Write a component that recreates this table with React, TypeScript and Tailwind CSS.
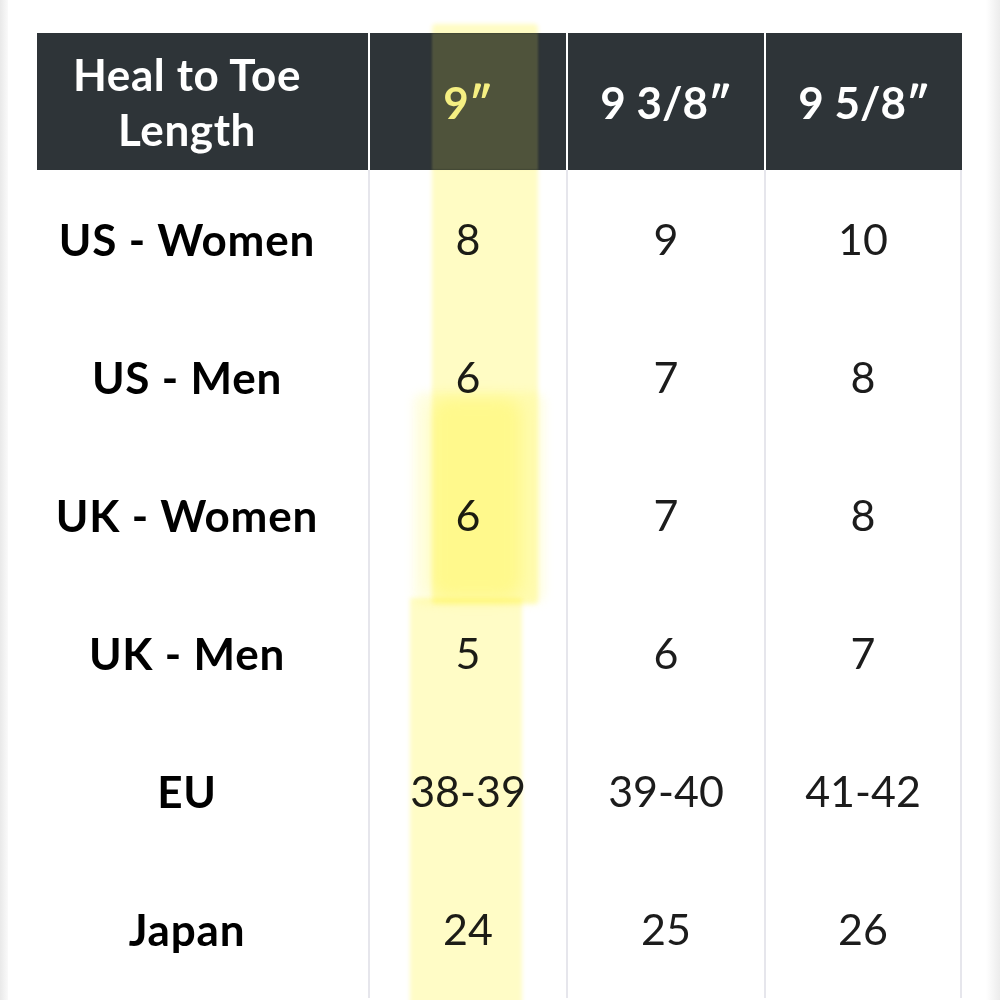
import React from "react";

const rows: [string, string, string, string][] = [
  ["US - Women", "8", "9", "10"],
  ["US - Men", "6", "7", "8"],
  ["UK - Women", "6", "7", "8"],
  ["UK - Men", "5", "6", "7"],
  ["EU", "38-39", "39-40", "41-42"],
  ["Japan", "24", "25", "26"],
];

export default function App() {
  return (
    <div
      className="relative w-[1000px] h-[1000px] overflow-hidden bg-white flex"
      style={{ fontFamily: "Lato, 'Noto Sans', sans-serif" }}
    >
      <div className="w-[8px] h-full bg-gradient-to-r from-[#e9e9e9] to-[#fafafa]" />
      <div className="flex-1 pl-[29px] pt-[33px]">
        <div className="w-[925px] grid grid-cols-[333px_198px_198px_196px]">
          {/* header */}
          <div className="h-[137px] bg-[#2e3438] flex items-center justify-center pr-[31px] border-r-2 border-white">
            <div className="text-white font-bold text-[44px] leading-[55px] text-center tracking-[0.6px]">
              Heal to Toe
              <br />
              Length
            </div>
          </div>
          <div className="h-[137px] bg-[#2e3438] flex items-center justify-center border-r-2 border-white">
            <span className="text-[#f4f1a6] font-bold text-[44px]">9″</span>
          </div>
          <div className="h-[137px] bg-[#2e3438] flex items-center justify-center border-r-2 border-white">
            <span className="text-white font-bold text-[44px]">9 3/8″</span>
          </div>
          <div className="h-[137px] bg-[#2e3438] flex items-center justify-center">
            <span className="text-white font-bold text-[44px]">9 5/8″</span>
          </div>
          {rows.map((r) => (
            <React.Fragment key={r[0]}>
              <div className="h-[138px] flex items-center justify-center pr-[31px] border-r-2 border-[#e6e6ec]">
                <span className="font-bold text-[44px] tracking-[0.8px] text-black">{r[0]}</span>
              </div>
              <div className="h-[138px] flex items-center justify-center border-r-2 border-[#e6e6ec]">
                <span className="text-[43px] text-[#1c1c1c]">{r[1]}</span>
              </div>
              <div className="h-[138px] flex items-center justify-center border-r-2 border-[#e6e6ec]">
                <span className="text-[43px] text-[#1c1c1c]">{r[2]}</span>
              </div>
              <div className="h-[138px] flex items-center justify-center border-r-2 border-[#e6e6ec]">
                <span className="text-[43px] text-[#1c1c1c]">{r[3]}</span>
              </div>
            </React.Fragment>
          ))}
        </div>
      </div>
      <div className="w-[14px] h-full bg-gradient-to-r from-[#ffffff] to-[#ececec]" />

      {/* highlighter strokes */}
      <div className="pointer-events-none absolute left-[432px] top-[24px] w-[106px] h-[580px] bg-[#fffcc4] mix-blend-multiply blur-[2px] rounded-[4px]" />
      <div className="pointer-events-none absolute left-[432px] top-[33px] w-[106px] h-[137px] bg-[rgba(255,248,140,0.16)] blur-[1px]" />
      <div className="pointer-events-none absolute left-[413px] top-[392px] w-[132px] h-[212px] bg-[#fffee4] mix-blend-multiply blur-[5px] rounded-[12px]" />
      <div className="pointer-events-none absolute left-[430px] top-[398px] w-[92px] h-[200px] bg-[#fffdcc] mix-blend-multiply blur-[8px] rounded-[18px]" />
      <div className="pointer-events-none absolute left-[410px] top-[598px] w-[112px] h-[410px] bg-[#fffcc6] mix-blend-multiply blur-[2px]" />
    </div>
  );
}
